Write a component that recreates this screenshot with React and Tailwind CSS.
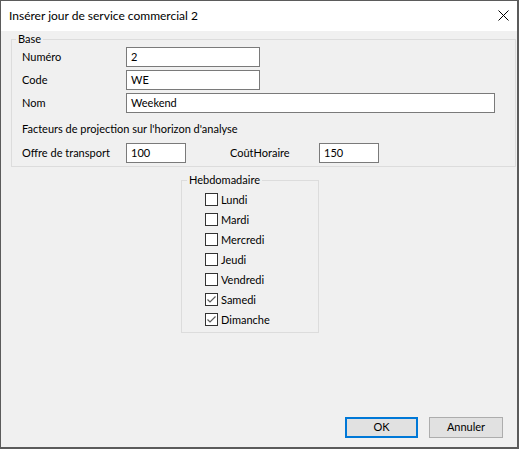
import React from "react";

const FONT = { fontFamily: 'Lato, "Noto Sans", sans-serif' };

const days = [
  { name: "Lundi", checked: false },
  { name: "Mardi", checked: false },
  { name: "Mercredi", checked: false },
  { name: "Jeudi", checked: false },
  { name: "Vendredi", checked: false },
  { name: "Samedi", checked: true },
  { name: "Dimanche", checked: true },
];

function TextBox({ value, width }) {
  return (
    <div
      className={`h-[20px] ${width} border border-[#7a7a7a] bg-white px-[4px] flex items-center text-[11px] text-black`}
    >
      {value}
    </div>
  );
}

function Field({ label, value, width }) {
  return (
    <div className="flex items-center h-[20px]">
      <div className="w-[104px] text-[11px] text-black">{label}</div>
      <TextBox value={value} width={width} />
    </div>
  );
}

function Checkbox({ label, checked }) {
  return (
    <div className="flex items-center h-[20px]">
      <div className="w-[13px] h-[13px] border border-[#333333] bg-white flex items-center justify-center">
        {checked && (
          <svg width="11" height="11" viewBox="0 0 11 11">
            <polyline
              points="1.5,5.5 4,8 9.5,2.5"
              fill="none"
              stroke="#5a5a5a"
              strokeWidth="1.2"
            />
          </svg>
        )}
      </div>
      <span className="ml-[3px] text-[11px] text-black leading-none">{label}</span>
    </div>
  );
}

export default function App() {
  return (
    <div
      style={FONT}
      className="w-[519px] h-[449px] flex flex-col border-l border-t border-r-2 border-b-2 border-[#5b5b5b] bg-[#f0f0f0]"
    >
      {/* Title bar */}
      <div className="h-[30px] bg-white flex justify-between shrink-0">
        <div className="pl-[8px] flex items-center text-[12px] text-black">
          Insérer jour de service commercial 2
        </div>
        <svg
          className="mt-[9px] mr-[8px]"
          width="11"
          height="11"
          viewBox="0 0 11 11"
        >
          <path d="M0.5 0.5 L10.5 10.5 M10.5 0.5 L0.5 10.5" stroke="#000" strokeWidth="1" />
        </svg>
      </div>

      {/* Content */}
      <div className="flex-1 flex flex-col">
        <fieldset className="ml-[10px] w-[505px] border border-[#dcdcdc] pb-[3px]">
          <legend className="ml-[4px] px-[2px] leading-[16px] text-[11px] text-black">
            Base
          </legend>
          <div className="pl-[10px] flex flex-col">
            <Field label="Numéro" value="2" width="w-[134px]" />
            <div className="mt-[3px]">
              <Field label="Code" value="WE" width="w-[134px]" />
            </div>
            <div className="mt-[3px]">
              <Field label="Nom" value="Weekend" width="w-[369px]" />
            </div>
            <div className="mt-[8px] leading-[16px] text-[11px] text-black">
              Facteurs de projection sur l'horizon d'analyse
            </div>
            <div className="mt-[6px] flex items-center h-[20px]">
              <div className="w-[104px] text-[11px] text-black">Offre de transport</div>
              <TextBox value="100" width="w-[60px]" />
              <div className="ml-[44px] w-[89px] text-[11px] text-black">CoûtHoraire</div>
              <TextBox value="150" width="w-[60px]" />
            </div>
          </div>
        </fieldset>

        <fieldset className="mt-[5px] ml-[180px] w-[138px] border border-[#dcdcdc] pb-[3px]">
          <legend className="ml-[5px] px-[2px] leading-[16px] text-[11px] text-black">
            Hebdomadaire
          </legend>
          <div className="pl-[23px] pt-[1px] flex flex-col">
            {days.map((d) => (
              <Checkbox key={d.name} label={d.name} checked={d.checked} />
            ))}
          </div>
        </fieldset>

        {/* Buttons */}
        <div className="mt-auto flex justify-end gap-[11px] pr-[14px] pb-[9px]">
          <button className="w-[73px] h-[21px] border-2 border-[#0078d7] bg-[#e1e1e1] text-[11px] text-black flex items-center justify-center">
            OK
          </button>
          <button className="w-[74px] h-[21px] border border-[#adadad] bg-[#e1e1e1] text-[11px] text-black flex items-center justify-center">
            Annuler
          </button>
        </div>
      </div>
    </div>
  );
}
